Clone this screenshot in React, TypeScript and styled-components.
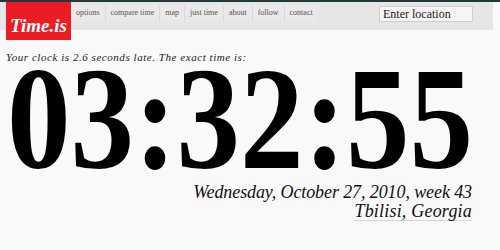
import React from 'react';
import styled, { createGlobalStyle } from 'styled-components';

const GlobalStyle = createGlobalStyle`
  html, body {
    margin: 0;
    padding: 0;
    background: #f9f9f9;
  }
  body {
    font-family: "Liberation Serif", "Times New Roman", serif;
    color: #111;
  }
`;

const Page = styled.div`
  width: 500px;
  height: 250px;
  overflow: hidden;
  border-top: 2px solid #26363c;
  box-sizing: border-box;
`;

const Header = styled.div`
  display: flex;
  align-items: flex-start;
  width: 493px;
  height: 28px;
  background: #e6e6e6;
`;

const Logo = styled.a`
  flex: none;
  display: flex;
  align-items: flex-end;
  justify-content: center;
  width: 65px;
  height: 38px;
  margin-left: 6px;
  padding-bottom: 3px;
  box-sizing: border-box;
  background: #ec1b24;
  color: #fff;
  font-size: 19px;
  font-weight: 700;
  font-style: italic;
  text-decoration: none;
`;

const Nav = styled.nav`
  display: flex;
  padding-top: 3px;
`;

const NavItem = styled.a`
  display: block;
  padding: 3px 5px 5px;
  border-right: 1px solid #d9d9d9;
  background: #e9e9e9;
  font-size: 8px;
  line-height: 9px;
  color: #555;
  text-decoration: none;
  white-space: nowrap;

  &:last-child {
    border-right: none;
  }
`;

const LocationInput = styled.input`
  margin: 4px 20px 0 auto;
  width: 94px;
  height: 16px;
  box-sizing: border-box;
  padding: 0 3px;
  border: 1px solid #cfcfcf;
  background: #f5f5f5;
  font-family: "Liberation Serif", serif;
  font-size: 12px;
  color: #222;
  outline: none;

  &::placeholder {
    color: #222;
  }
`;

const Message = styled.p`
  margin: 20px 0 0 6px;
  font-size: 11px;
  line-height: 14px;
  font-style: italic;
  letter-spacing: 0.55px;
  color: #222;
`;

const Clock = styled.div`
  margin: -5px 0 0 7px;
  font-size: 147px;
  line-height: 120px;
  font-weight: 700;
  color: #000;
  white-space: nowrap;
  transform-origin: left top;
  transform: scaleX(0.865);
`;

const DateBlock = styled.div`
  display: flex;
  flex-direction: column;
  align-items: flex-end;
  padding-right: 28px;
  margin-top: 4px;
  font-style: italic;
  font-size: 18px;
  line-height: 19px;
  letter-spacing: -0.1px;
  color: #111;
`;

const Place = styled.a`
  color: #111;
  font-size: 18px;
  letter-spacing: 0.2px;
  text-decoration: none;
  border-bottom: 1px solid #d6d6d6;
  line-height: 18px;
`;

const navLinks = ['options', 'compare time', 'map', 'just time', 'about', 'follow', 'contact'];

const App = () => {
  return (
    <>
      <GlobalStyle />
      <Page>
        <Header>
          <Logo href="#">Time.is</Logo>
          <Nav>
            {navLinks.map((link) => (
              <NavItem key={link} href="#">
                {link}
              </NavItem>
            ))}
          </Nav>
          <LocationInput placeholder="Enter location" />
        </Header>
        <Message>Your clock is 2.6 seconds late. The exact time is:</Message>
        <Clock>03:32:55</Clock>
        <DateBlock>
          <span>Wednesday, October 27, 2010, week 43</span>
          <Place href="#">Tbilisi, Georgia</Place>
        </DateBlock>
      </Page>
    </>
  );
};

export default App;
